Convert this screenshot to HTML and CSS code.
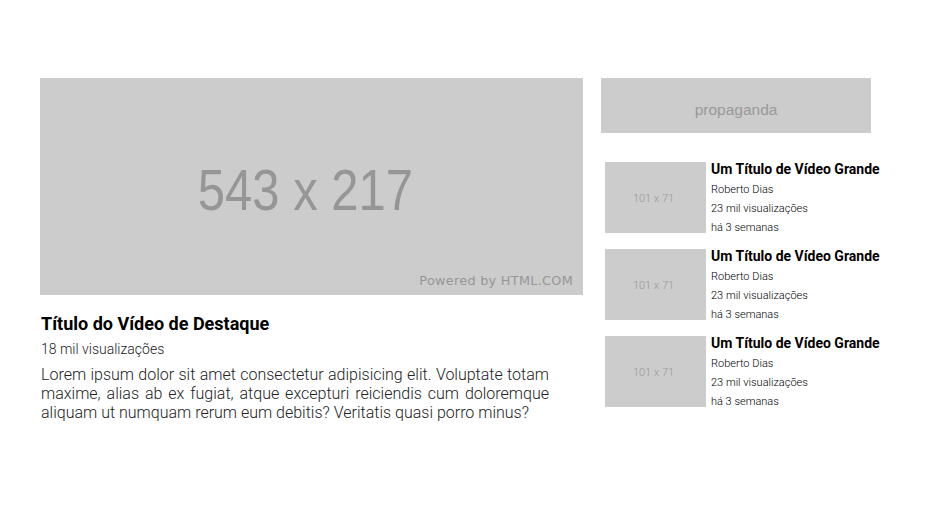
FILE: index.html
```html
<!DOCTYPE html>
<html lang="pt">
<head>
<meta charset="utf-8">
<link rel="stylesheet" href="styles.css">
</head>
<body>
<div class="page">
  <main class="featured">
    <div class="hero">
      <span class="hero-size">543 x 217</span>
      <span class="powered">Powered by HTML.COM</span>
    </div>
    <h1 class="feat-title">Título do Vídeo de Destaque</h1>
    <p class="feat-views">18 mil visualizações</p>
    <p class="feat-desc">Lorem ipsum dolor sit amet consectetur adipisicing elit. Voluptate totam maxime, alias ab ex fugiat, atque excepturi reiciendis cum doloremque aliquam ut numquam rerum eum debitis? Veritatis quasi porro minus?</p>
  </main>
  <aside class="side">
    <div class="ad">propaganda</div>
    <ul class="list">
      <li class="item">
        <div class="thumb">101 x 71</div>
        <div class="info">
          <h2 class="item-title">Um Título de Vídeo Grande</h2>
          <p class="meta">Roberto Dias</p>
          <p class="meta">23 mil visualizações</p>
          <p class="meta">há 3 semanas</p>
        </div>
      </li>
      <li class="item">
        <div class="thumb">101 x 71</div>
        <div class="info">
          <h2 class="item-title">Um Título de Vídeo Grande</h2>
          <p class="meta">Roberto Dias</p>
          <p class="meta">23 mil visualizações</p>
          <p class="meta">há 3 semanas</p>
        </div>
      </li>
      <li class="item">
        <div class="thumb">101 x 71</div>
        <div class="info">
          <h2 class="item-title">Um Título de Vídeo Grande</h2>
          <p class="meta">Roberto Dias</p>
          <p class="meta">23 mil visualizações</p>
          <p class="meta">há 3 semanas</p>
        </div>
      </li>
    </ul>
  </aside>
</div>
</body>
</html>
```
FILE: styles.css
```css
* { box-sizing: border-box; }
html, body { margin: 0; padding: 0; background: #fff; }
body { font-family: Roboto, "Liberation Sans", sans-serif; color: #000; }

.page {
  display: flex;
  align-items: flex-start;
  gap: 18px;
  padding: 78px 0 0 40px;
}

.featured { width: 543px; }

.hero {
  position: relative;
  width: 543px;
  height: 217px;
  background: #cccccc;
  display: flex;
  align-items: center;
  justify-content: center;
}
.hero-size {
  font-family: "Liberation Sans", sans-serif;
  font-size: 58px;
  color: #969696;
  margin-top: 6px;
  margin-right: 12px;
  transform: scaleX(0.845);
}
.powered {
  position: absolute;
  right: 10px;
  bottom: 7px;
  font-family: "DejaVu Sans", sans-serif;
  font-size: 12.8px;
  color: #969696;
  letter-spacing: 0.3px;
}

.feat-title {
  margin: 19px 0 0 1px;
  font-size: 18px;
  font-weight: 700;
  line-height: 20px;
  color: #000;
}
.feat-views {
  margin: 5px 0 0 1px;
  font-size: 14px;
  font-weight: 300;
  line-height: 20px;
  color: #222;
}
.feat-desc {
  margin: 6px 0 0 1px;
  width: 508px;
  font-size: 16px;
  font-weight: 300;
  line-height: 19px;
  color: #222;
  text-align: justify;
}

.side { width: 270px; }

.ad {
  height: 55px;
  background: #cccccc;
  color: #999999;
  font-family: "Liberation Sans", sans-serif;
  font-size: 15.5px;
  display: flex;
  align-items: center;
  justify-content: center;
  padding-top: 9px;
}

.list {
  list-style: none;
  margin: 29px 0 0 4px;
  padding: 0;
  display: flex;
  flex-direction: column;
  gap: 16px;
}
.item {
  display: flex;
  gap: 5px;
  height: 71px;
}
.thumb {
  flex: 0 0 101px;
  height: 71px;
  background: #cccccc;
  color: #999999;
  font-size: 11px;
  font-weight: 300;
  padding: 2px 4px 0 0;
  display: flex;
  align-items: center;
  justify-content: center;
}
.info { margin-top: -2px; }
.item-title {
  margin: 0 0 1px;
  font-size: 14px;
  font-weight: 700;
  line-height: 19px;
  color: #000;
  white-space: nowrap;
}
.meta {
  margin: 0;
  font-size: 11px;
  font-weight: 300;
  line-height: 19px;
  color: #000;
}
```
